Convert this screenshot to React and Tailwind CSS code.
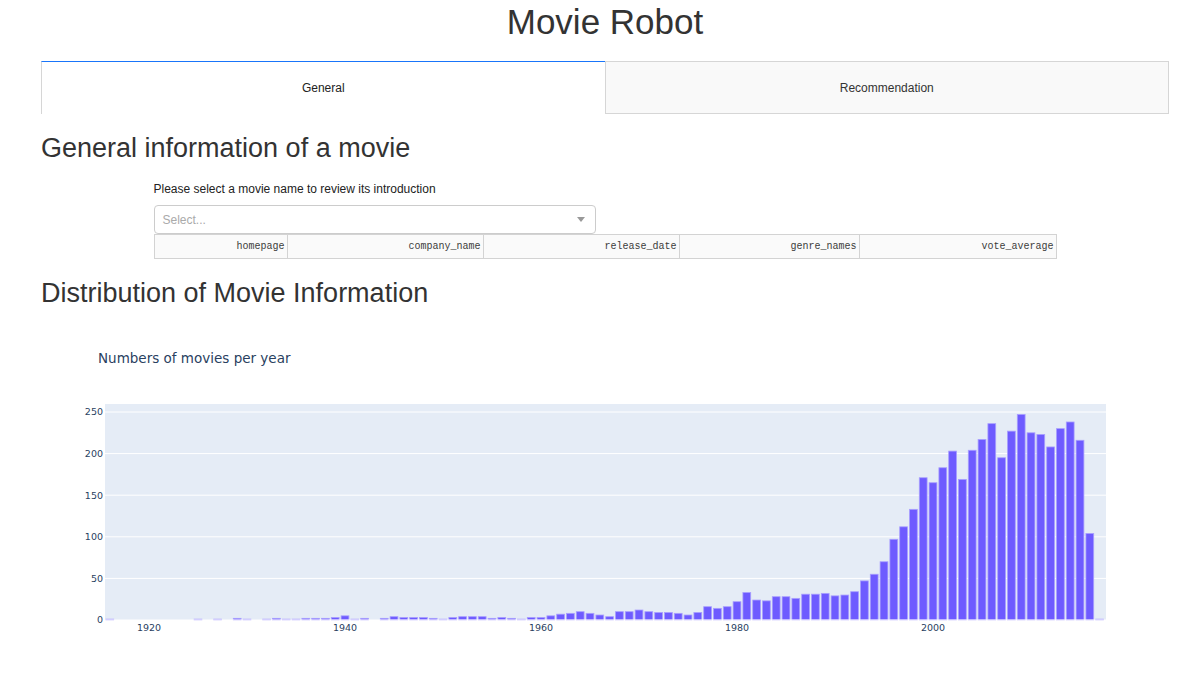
import React from 'react';

// movies per year, read off the plotly histogram
const counts = {
  1916: 1, 1925: 1, 1927: 1, 1929: 2, 1930: 1, 1932: 1, 1933: 2, 1934: 1, 1935: 1,
  1936: 2, 1937: 2, 1938: 2, 1939: 3, 1940: 5, 1941: 1, 1942: 2, 1944: 2, 1945: 4,
  1946: 3, 1947: 3, 1948: 3, 1949: 2, 1950: 1, 1951: 3, 1952: 4, 1953: 4, 1954: 4,
  1955: 2, 1956: 3, 1957: 2, 1958: 1, 1959: 3, 1960: 3, 1961: 5, 1962: 7, 1963: 8,
  1964: 10, 1965: 8, 1966: 6, 1967: 4, 1968: 10, 1969: 10, 1970: 12, 1971: 10,
  1972: 9, 1973: 9, 1974: 8, 1975: 6, 1976: 9, 1977: 16, 1978: 14, 1979: 16,
  1980: 22, 1981: 33, 1982: 24, 1983: 23, 1984: 28, 1985: 28, 1986: 26, 1987: 31,
  1988: 31, 1989: 32, 1990: 29, 1991: 30, 1992: 34, 1993: 47, 1994: 55, 1995: 70,
  1996: 97, 1997: 112, 1998: 133, 1999: 171, 2000: 165, 2001: 183, 2002: 203,
  2003: 169, 2004: 204, 2005: 217, 2006: 236, 2007: 195, 2008: 227, 2009: 247,
  2010: 225, 2011: 223, 2012: 208, 2013: 230, 2014: 238, 2015: 216, 2016: 104,
  2017: 1,
};

const columns = [
  { name: 'homepage', w: 'w-[133px]' },
  { name: 'company_name', w: 'w-[196px]' },
  { name: 'release_date', w: 'w-[196px]' },
  { name: 'genre_names', w: 'w-[180px]' },
  { name: 'vote_average', w: 'flex-1' },
];

// plot geometry (page coordinates)
const X0 = 105, X1 = 1106, YTOP = 404, YZERO = 620;
const PX_YEAR = 9.8, PX_UNIT = 0.832;
const xOf = (year) => 149 + (year - 1920) * PX_YEAR;
const yOf = (v) => YZERO - v * PX_UNIT;

const BarChart = () => {
  const font = 'DejaVu Sans, Verdana, sans-serif';
  return (
    <svg width="1128" height="372" className="block">
      <g transform="translate(-41,-309)" fontFamily={font} fill="#2a3f5f">
        <text x="98" y="363" fontSize="13.5">Numbers of movies per year</text>
        <rect x={X0} y={YTOP} width={X1 - X0} height={YZERO - YTOP} fill="#e5ecf6" />
        {[50, 100, 150, 200, 250].map(v => (
          <line key={v} x1={X0} x2={X1} y1={yOf(v)} y2={yOf(v)} stroke="#ffffff" strokeWidth="1" />
        ))}
        {Object.entries(counts).map(([year, v]) => {
          const cx = xOf(Number(year));
          const h = v * PX_UNIT;
          return (
            <rect
              key={year}
              x={cx - 3.9}
              y={YZERO - h}
              width="7.8"
              height={h}
              fill="#6e5bff"
              stroke="#a99fff"
              strokeWidth="0.8"
            />
          );
        })}
        <line x1={X0} x2={X1} y1={YZERO} y2={YZERO} stroke="#ffffff" strokeWidth="1" />
        {[0, 50, 100, 150, 200, 250].map(v => (
          <text key={v} x="103" y={yOf(v) + 3.4} fontSize="9.5" textAnchor="end">{v}</text>
        ))}
        {[1920, 1940, 1960, 1980, 2000].map(y => (
          <text key={y} x={xOf(y)} y="630.5" fontSize="9.5" textAnchor="middle">{y}</text>
        ))}
      </g>
    </svg>
  );
};

const App = () => {
  return (
    <div className="w-[1181px] h-[681px] overflow-hidden bg-white text-[#333333] font-['Liberation_Sans',Arial,sans-serif]">
      <div className="ml-[41px] w-[1128px]">
        <h1 className="text-center text-[35px] leading-[44px] font-normal">Movie Robot</h1>

        <div className="mt-[17px] flex h-[53px]">
          <div className="flex-1 flex items-center justify-center border-t border-l border-t-[#1975fa] border-l-[#d6d6d6] bg-white text-[12px] text-[#222]">
            General
          </div>
          <div className="flex-1 flex items-center justify-center border border-[#d6d6d6] bg-[#f9f9f9] text-[12px] text-[#333]">
            Recommendation
          </div>
        </div>

        <h2 className="mt-[18px] text-[27px] leading-[32px] font-normal">General information of a movie</h2>

        <div className="mx-auto w-[903px]">
          <div className="mt-[17px] text-[12px] leading-[16px] text-[#222]">Please select a movie name to review its introduction</div>
          <div className="mt-[8px] w-[442px] h-[29px] flex items-center justify-between border border-[#cccccc] rounded-[4px] pl-[8px] pr-[10px] bg-white">
            <span className="text-[12px] text-[#aaaaaa]">Select...</span>
            <span className="w-0 h-0 border-l-[4px] border-r-[4px] border-t-[5px] border-l-transparent border-r-transparent border-t-[#999999]"></span>
          </div>
          <div className="flex h-[25px] border border-[#d3d3d3] bg-[#fafafa] font-['Liberation_Mono','Courier_New',monospace] text-[10px] text-[#3c3c3c]">
            {columns.map((c, i) => (
              <div
                key={c.name}
                className={`${c.w} flex items-center justify-end pr-[2px] ${i < columns.length - 1 ? 'border-r border-[#d3d3d3]' : ''}`}
              >
                {c.name}
              </div>
            ))}
          </div>
        </div>

        <h2 className="mt-[18px] text-[27px] leading-[32px] font-normal">Distribution of Movie Information</h2>

        <BarChart />
      </div>
    </div>
  );
};

export default App;
